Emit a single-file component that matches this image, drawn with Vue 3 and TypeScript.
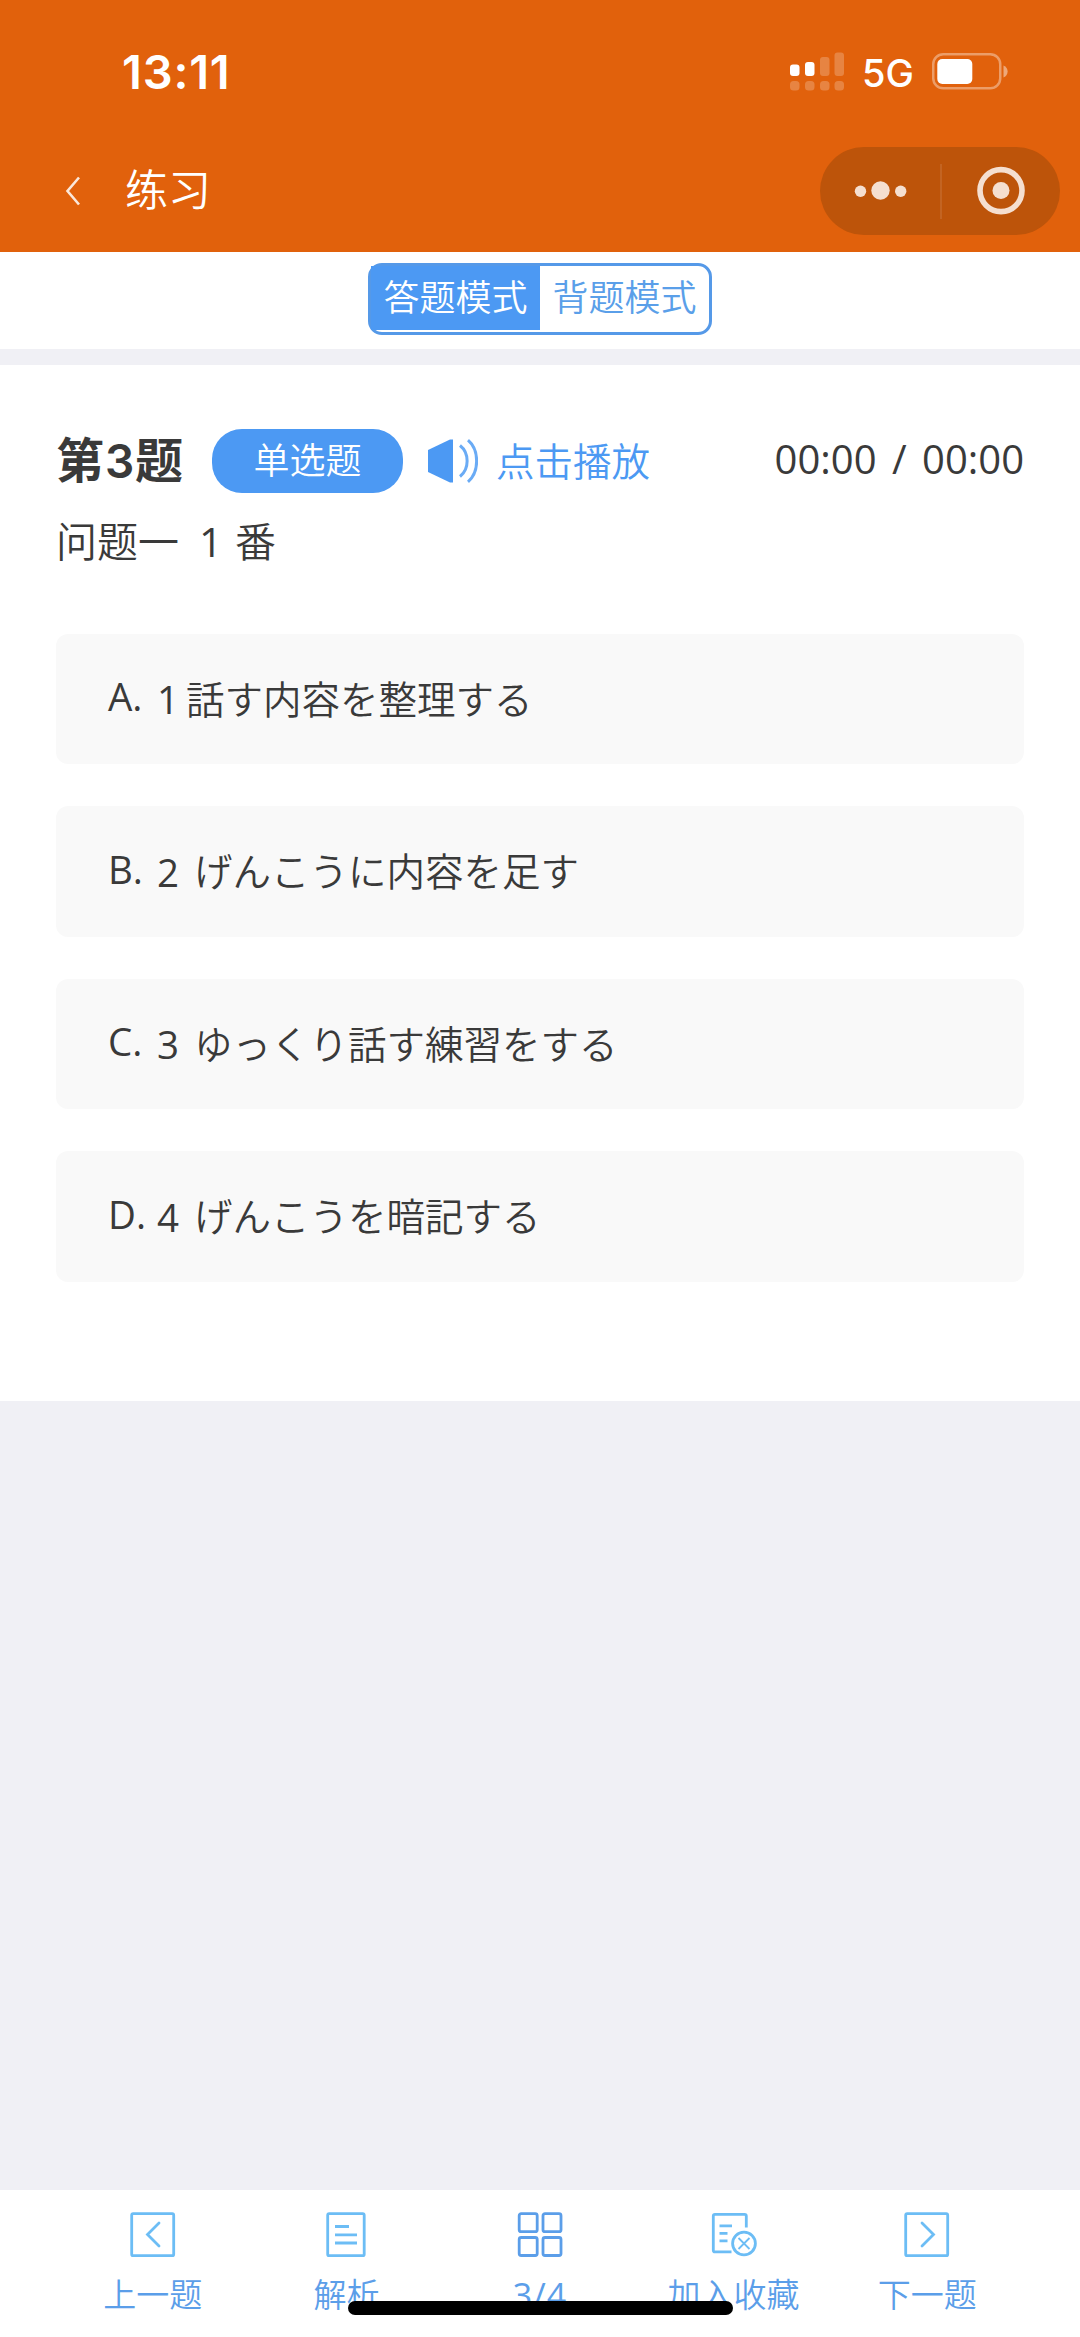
<script setup lang="ts">
interface Option {
  key: string
  no: string
  text: string
}

const options: Option[] = [
  { key: 'A', no: '1', text: '話す内容を整理する' },
  { key: 'B', no: '2', text: 'げんこうに内容を足す' },
  { key: 'C', no: '3', text: 'ゆっくり話す練習をする' },
  { key: 'D', no: '4', text: 'げんこうを暗記する' },
]
</script>

<template>
  <div class="screen">
    <header class="header">
      <div class="status">
        <span class="clock">13:11</span>
        <div class="indicators">
          <svg class="signal" width="54" height="40" viewBox="0 0 54 40" fill="#fff">
            <rect x="0" y="12.5" width="9.5" height="11.5" rx="3" />
            <rect x="15" y="10" width="9.5" height="14" rx="3" />
            <g opacity="0.22">
              <rect x="30" y="5" width="9.5" height="19" rx="3" />
              <rect x="44.5" y="0.5" width="9.5" height="23.5" rx="3" />
              <rect x="0" y="29" width="9.5" height="9.5" rx="3.5" />
              <rect x="15" y="29" width="9.5" height="9.5" rx="3.5" />
              <rect x="30" y="29" width="9.5" height="9.5" rx="3.5" />
              <rect x="44.5" y="29" width="9.5" height="9.5" rx="3.5" />
            </g>
          </svg>
          <span class="network">5G</span>
          <svg class="battery" width="76" height="37" viewBox="0 0 76 37">
            <rect x="1.25" y="1.25" width="67" height="34" rx="10" fill="none" stroke="#fff" stroke-opacity="0.38" stroke-width="2.5" />
            <rect x="5.3" y="6" width="35" height="25" rx="5" fill="#fff" />
            <path d="M71.5 12.5C77 14.5 77 22.5 71.5 24.5Z" fill="#fff" fill-opacity="0.45" />
          </svg>
        </div>
      </div>
      <nav class="navbar">
        <svg class="back" width="16" height="30" viewBox="0 0 16 30" fill="none" stroke="#fff" stroke-opacity="0.85" stroke-width="2.6">
          <path d="M14 1.5L2.500 15L14 28.5" />
        </svg>
        <h1 class="title">练习</h1>
        <div class="capsule">
          <svg width="240" height="88" viewBox="0 0 240 88" fill="#f5dfd0">
            <circle cx="40.5" cy="44.2" r="5.7" />
            <circle cx="60.5" cy="43.5" r="9.2" />
            <circle cx="80.7" cy="44.2" r="5.7" />
            <rect x="120.3" y="17" width="1.4" height="55" fill="#fff" fill-opacity="0.14" />
            <circle cx="181" cy="43.6" r="21" fill="none" stroke="#f5dfd0" stroke-width="5.6" />
            <circle cx="181" cy="43.6" r="8.5" />
          </svg>
        </div>
      </nav>
    </header>

    <div class="mode-bar">
      <div class="segmented">
        <div class="segment active">答题模式</div>
        <div class="segment">背题模式</div>
      </div>
    </div>

    <main class="question">
      <div class="question-head">
        <span class="index">第<span class="index-no">3</span>题</span>
        <span class="tag">单选题</span>
        <svg class="speaker" width="50" height="44" viewBox="0 0 50 44">
          <path d="M0 11L22 0.5H25V43.5H22L0 33Z" fill="#4c99f3" />
          <g fill="none" stroke="#6aabf5" stroke-width="3">
            <path d="M32 6.5C41.500 14 41.500 30 32 37.500" />
            <path d="M40 1.200C51.500 11 51.500 33 40 42.800" />
          </g>
        </svg>
        <span class="play">点击播放</span>
        <span class="time">00:00 / 00:00</span>
      </div>
      <p class="stem">问题一<span class="stem-no">1</span>番</p>
      <ul class="options">
        <li v-for="o in options" :key="o.key" class="option">
          <span class="option-key">{{ o.key }}.</span>
          <span class="option-no" :class="{ narrow: o.no === '1' }">{{ o.no }}</span>
          <span class="option-text">{{ o.text }}</span>
        </li>
      </ul>
    </main>

    <footer class="toolbar">
      <div class="tool">
        <svg width="46" height="46" viewBox="0 0 46 46" fill="none" stroke="#6cbdf5" stroke-width="2.8">
          <rect x="1.700" y="1.700" width="42" height="42" rx="1.500" />
          <path d="M29 11L17.500 22.500L29 34" stroke-linecap="round" />
        </svg>
        <span>上一题</span>
      </div>
      <div class="tool">
        <svg width="46" height="46" viewBox="0 0 46 46" fill="none" stroke="#6cbdf5" stroke-width="2.8">
          <rect x="4.700" y="1.700" width="36.500" height="42" rx="1.500" />
          <path d="M12 14.500H26M12 22.800H34M12 31H34" />
        </svg>
        <span>解析</span>
      </div>
      <div class="tool">
        <svg width="46" height="46" viewBox="0 0 46 46" fill="none" stroke="#5b9ee9" stroke-width="2.8">
          <rect x="2.200" y="1.700" width="18" height="18" rx="2" />
          <rect x="26" y="1.700" width="18" height="18" rx="2" />
          <rect x="2.200" y="25.500" width="18" height="18" rx="2" />
          <rect x="26" y="25.500" width="18" height="18" rx="2" />
        </svg>
        <span class="progress">3/4</span>
      </div>
      <div class="tool">
        <svg width="46" height="46" viewBox="0 0 46 46" fill="none" stroke="#6cbdf5" stroke-width="2.8">
          <path d="M35.300 15.500V4Q35.300 2.300 33.600 2.300H4Q2.300 2.300 2.300 4V38.200Q2.300 39.900 4 39.900H20.500" />
          <path d="M8.500 13.800H21M8.500 21.300H16.500M8.500 28.800H16.500" />
          <circle cx="33" cy="31.500" r="11.400" />
          <path d="M27.500 26L38.500 37M38.500 26L27.500 37" stroke-width="1.800" />
        </svg>
        <span>加入收藏</span>
      </div>
      <div class="tool">
        <svg width="46" height="46" viewBox="0 0 46 46" fill="none" stroke="#6cbdf5" stroke-width="2.8">
          <rect x="1.700" y="1.700" width="42" height="42" rx="1.500" />
          <path d="M18 11L29.500 22.500L18 34" stroke-linecap="round" />
        </svg>
        <span>下一题</span>
      </div>
      <div class="home-indicator"></div>
    </footer>
  </div>
</template>

<style>
body {
  margin: 0;
}
</style>

<style scoped>
.screen {
  display: flex;
  flex-direction: column;
  width: 1080px;
  height: 2337px;
  overflow: hidden;
  background: #f0f0f5;
  color: #3a3a3a;
  font-family: Roboto, "Noto Sans CJK SC", sans-serif;
  font-weight: 350;
}

.header {
  height: 252px;
  background: #e1610c;
  color: #fff;
}

.status {
  display: flex;
  justify-content: space-between;
  box-sizing: border-box;
  height: 147px;
  padding: 42px 72px 0 122px;
  font-family: Inter, sans-serif;
}

.clock {
  font-size: 47px;
  line-height: 60px;
  font-weight: 600;
  letter-spacing: 0.8px;
}

.indicators {
  display: flex;
  align-items: flex-start;
}

.signal {
  margin-top: 10px;
}

.network {
  width: 70px;
  margin-left: 18px;
  font-size: 38px;
  line-height: 62px;
  font-weight: 450;
}

.battery {
  margin-top: 11px;
}

.navbar {
  display: flex;
  align-items: center;
  height: 88px;
  padding: 0 20px 0 65px;
}

.title {
  margin: 0 auto 0 44px;
  font-size: 43px;
  line-height: 60px;
  font-weight: 350;
}

.capsule {
  height: 88px;
  border-radius: 44px;
  background: #bd540a;
}

.mode-bar {
  display: flex;
  justify-content: center;
  box-sizing: border-box;
  height: 97px;
  padding-top: 11px;
  background: #fff;
}

.segmented {
  display: flex;
  box-sizing: border-box;
  width: 344px;
  height: 72px;
  border: 3px solid #5599e8;
  border-radius: 14px;
}

.segment {
  width: 169px;
  height: 64px;
  color: #5a9fe9;
  font-size: 36px;
  line-height: 66px;
  text-align: center;
}

.segment.active {
  background: #4c99f3;
  color: #fff;
}

.question {
  box-sizing: border-box;
  height: 1036px;
  margin-top: 16px;
  padding: 64px 56px 0;
  background: #fff;
}

.question-head {
  display: flex;
  align-items: center;
  height: 64px;
}

.index {
  width: 156px;
  font-size: 48px;
  line-height: 64px;
  padding-top: 2px;
  font-weight: 700;
  white-space: nowrap;
}

.index-no {
  display: inline-block;
  width: 31px;
  font-family: Inter, sans-serif;
  font-weight: 600;
  font-size: 46px;
  line-height: 1;
  text-align: center;
}

.tag {
  width: 191px;
  height: 64px;
  border-radius: 30px;
  background: #4c99f3;
  color: #fff;
  font-size: 36px;
  line-height: 66px;
  text-align: center;
}

.speaker {
  margin-left: 25px;
}

.play {
  margin-left: 18px;
  padding-top: 3px;
  color: #4c99f3;
  font-size: 38.5px;
  line-height: 64px;
}

.time {
  margin-left: auto;
  padding-bottom: 4px;
  font-family: "Open Sans", sans-serif;
  font-weight: 400;
  font-size: 40px;
  line-height: 64px;
  word-spacing: 5px;
}

.stem {
  margin: 19px 0 0;
  font-size: 41px;
  line-height: 62px;
}

.stem-no {
  display: inline-block;
  width: 56px;
  padding-left: 20px;
  box-sizing: border-box;
  font-family: "Open Sans", sans-serif;
  font-weight: 400;
  line-height: 1;
}

.options {
  display: flex;
  flex-direction: column;
  gap: 42.300px;
  margin: 60px 0 0;
  padding: 0;
  list-style: none;
}

.option {
  display: flex;
  align-items: center;
  height: 130.200px;
  padding-left: 52px;
  border-radius: 12px;
  background: #f9f9f9;
  font-family: Roboto, "Noto Sans CJK JP", sans-serif;
  font-size: 38.500px;
  line-height: 60px;
}

.option-key {
  width: 49px;
  padding-bottom: 6px;
  font-family: "Open Sans", sans-serif;
  font-weight: 400;
}

.option-no {
  width: 37px;
  font-family: "Open Sans", sans-serif;
  font-weight: 400;
}

.option-no.narrow {
  width: 29px;
}

.option-text {
  padding-top: 3px;
}

.toolbar {
  position: relative;
  display: flex;
  box-sizing: border-box;
  height: 147px;
  margin-top: auto;
  padding: 22px 56px 0;
  background: #fff;
}

.tool {
  display: flex;
  flex: 1 1 0;
  flex-direction: column;
  align-items: center;
  gap: 13px;
  color: #5b9ee9;
  font-size: 33px;
  line-height: 50px;
  white-space: nowrap;
}

.progress {
  font-family: "Open Sans", sans-serif;
  font-weight: 400;
  font-size: 34px;
  line-height: 48px;
  letter-spacing: 1px;
}

.home-indicator {
  position: absolute;
  bottom: 22px;
  left: 348px;
  width: 385px;
  height: 14px;
  border-radius: 7px;
  background: #000;
}
</style>
